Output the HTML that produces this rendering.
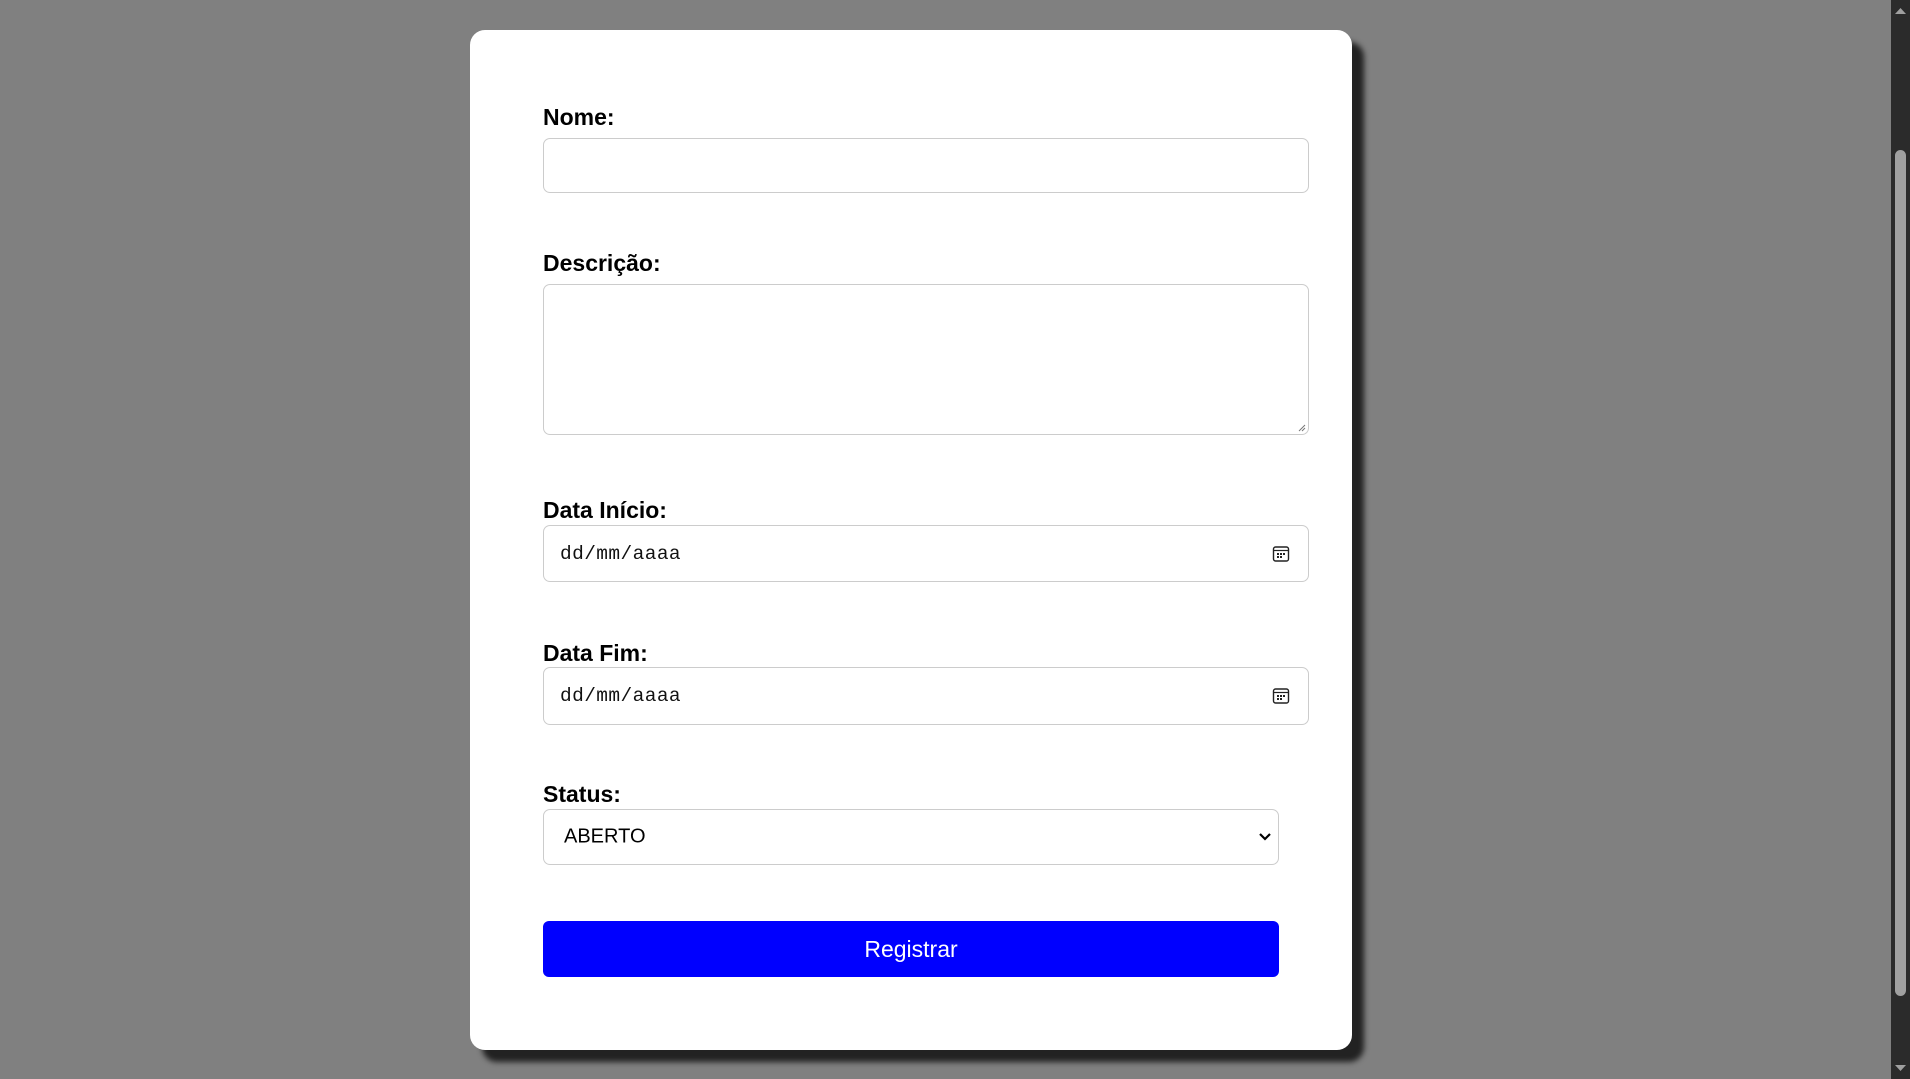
<!DOCTYPE html>
<html><head><meta charset="utf-8"><style>
*{box-sizing:border-box;margin:0;padding:0}
html,body{width:1910px;height:1079px;overflow:hidden;background:#808080;font-family:"Liberation Sans",Arial,sans-serif}
.card{position:absolute;left:470px;top:30px;width:882px;height:1020px;background:#fff;border-radius:15px;box-shadow:12px 12px 6px #222}
.lbl{position:absolute;left:543px;font-weight:bold;font-size:23px;color:#000;line-height:26px}
.box{position:absolute;left:543px;width:766px;border:1px solid #ccc;border-radius:7px;background:#fff}
.date{font-family:"Liberation Mono",monospace;font-size:19.5px;letter-spacing:0.4px;color:#111;position:absolute;left:16px;top:50%;transform:translateY(-50%)}
.cal{position:absolute;right:18px;top:50%;transform:translateY(-50%)}
.sb{position:absolute;left:1891px;top:0;width:19px;height:1079px;background:#2b2b2b}
.thumb{position:absolute;left:4px;top:150px;width:11px;height:846px;background:#a0a0a0;border-radius:6px}
</style></head><body>
<div class="card"></div>
<div class="lbl" style="top:104px">Nome:</div>
<div class="box" style="top:138px;height:55px"></div>
<div class="lbl" style="top:250px">Descrição:</div>
<div class="box" style="top:284px;height:151px">
<svg style="position:absolute;right:2px;bottom:2px" width="9" height="9"><path d="M8 2L2 8M8 5L5 8" stroke="#777" stroke-width="1"/></svg></div>
<div class="lbl" style="top:497px">Data Início:</div>
<div class="box" style="top:525px;height:57px"><span class="date">dd/mm/aaaa</span>
<svg class="cal" width="18" height="18" viewBox="0 0 18 18"><rect x="1.5" y="2" width="15" height="14" rx="2" fill="none" stroke="#222" stroke-width="1.4"/><line x1="1.5" y1="5.5" x2="16.5" y2="5.5" stroke="#222" stroke-width="1.2"/><g fill="#222"><rect x="5" y="8" width="2" height="2"/><rect x="8" y="8" width="2" height="2"/><rect x="11" y="8" width="2" height="2"/><rect x="5" y="11" width="2" height="2"/><rect x="8" y="11" width="2" height="2"/></g></svg></div>
<div class="lbl" style="top:640px">Data Fim:</div>
<div class="box" style="top:667px;height:58px"><span class="date">dd/mm/aaaa</span>
<svg class="cal" width="18" height="18" viewBox="0 0 18 18"><rect x="1.5" y="2" width="15" height="14" rx="2" fill="none" stroke="#222" stroke-width="1.4"/><line x1="1.5" y1="5.5" x2="16.5" y2="5.5" stroke="#222" stroke-width="1.2"/><g fill="#222"><rect x="5" y="8" width="2" height="2"/><rect x="8" y="8" width="2" height="2"/><rect x="11" y="8" width="2" height="2"/><rect x="5" y="11" width="2" height="2"/><rect x="8" y="11" width="2" height="2"/></g></svg></div>
<div class="lbl" style="top:781px">Status:</div>
<div class="box" style="top:809px;height:56px;width:736px"><span style="position:absolute;left:20px;top:50%;transform:translateY(-50%);font-size:20px;color:#000">ABERTO</span>
<svg style="position:absolute;right:6px;top:22px" width="14" height="10"><path d="M2 2L7 7L12 2" fill="none" stroke="#000" stroke-width="2.2"/></svg></div>
<div style="position:absolute;left:543px;top:921px;width:736px;height:56px;background:#0000ff;border-radius:6px;color:#fff;font-size:23px;text-align:center;line-height:56px">Registrar</div>
<div class="sb"><div class="thumb"></div>
<svg style="position:absolute;left:3px;top:7px" width="13" height="8"><path d="M1 7L6.5 1L12 7Z" fill="#a0a0a0"/></svg>
<svg style="position:absolute;left:3px;top:1064px" width="13" height="8"><path d="M1 1L6.5 7L12 1Z" fill="#a0a0a0"/></svg></div>
</body></html>
